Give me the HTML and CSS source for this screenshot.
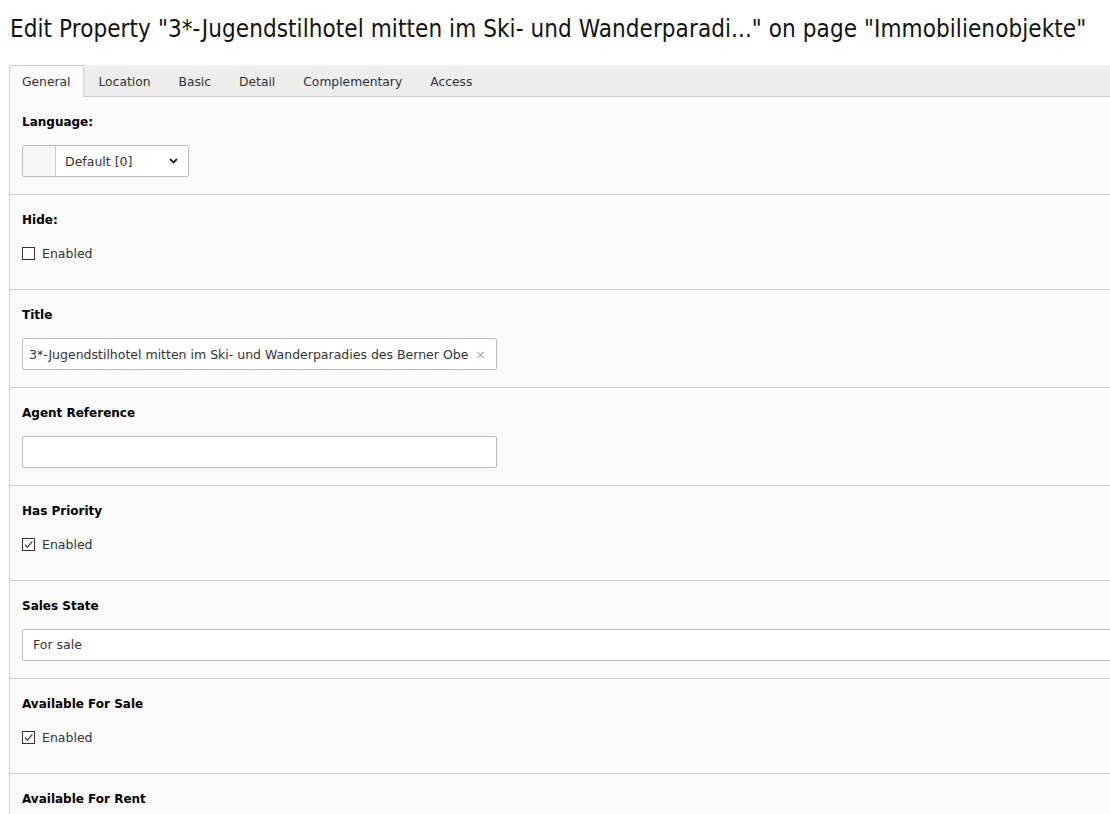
FILE: index.html
```html
<!DOCTYPE html>
<html lang="en">
<head>
<meta charset="utf-8">
<title>Edit Property</title>
<link rel="stylesheet" href="styles.css">
</head>
<body>
<h1 class="page-title">Edit Property "3*-Jugendstilhotel mitten im Ski- und Wanderparadi..." on page "Immobilienobjekte"</h1>
<div class="tabs">
  <div class="tab active">General</div>
  <div class="tab">Location</div>
  <div class="tab">Basic</div>
  <div class="tab">Detail</div>
  <div class="tab">Complementary</div>
  <div class="tab">Access</div>
</div>
<div class="panel">
  <div class="section">
    <div class="label">Language:</div>
    <div class="lang-select">
      <span class="addon"></span>
      <span class="lang-value">Default [0]</span>
      <svg class="chev" width="9" height="6" viewBox="0 0 9 6"><path d="M1 1 L4.5 4.5 L8 1" fill="none" stroke="#222" stroke-width="1.8"/></svg>
    </div>
  </div>
  <div class="section">
    <div class="label">Hide:</div>
    <div class="check"><span class="box"></span><span>Enabled</span></div>
  </div>
  <div class="section">
    <div class="label">Title</div>
    <div class="input">
      <span class="input-text">3*-Jugendstilhotel mitten im Ski- und Wanderparadies des Berner Oberland</span>
      <span class="clear">&#215;</span>
    </div>
  </div>
  <div class="section">
    <div class="label">Agent Reference</div>
    <div class="input"></div>
  </div>
  <div class="section">
    <div class="label">Has Priority</div>
    <div class="check"><span class="box"><svg width="11" height="11" viewBox="0 0 11 11"><path d="M1.8 5.6 L4.4 8.2 L9.4 2.4" fill="none" stroke="#333" stroke-width="1.1"/></svg></span><span>Enabled</span></div>
  </div>
  <div class="section">
    <div class="label">Sales State</div>
    <div class="wide-select">For sale</div>
  </div>
  <div class="section">
    <div class="label">Available For Sale</div>
    <div class="check"><span class="box"><svg width="11" height="11" viewBox="0 0 11 11"><path d="M1.8 5.6 L4.4 8.2 L9.4 2.4" fill="none" stroke="#333" stroke-width="1.1"/></svg></span><span>Enabled</span></div>
  </div>
  <div class="section">
    <div class="label">Available For Rent</div>
    <div class="check"><span class="box"></span><span>Enabled</span></div>
  </div>
</div>
</body>
</html>
```
FILE: styles.css
```css
html, body {
  margin: 0;
  padding: 0;
  overflow: hidden;
  background: #fff;
}
body {
  font-family: "DejaVu Sans", Verdana, sans-serif;
  font-size: 12.5px;
  color: #333;
  width: 1110px;
  height: 814px;
}
.page-title {
  margin: 0;
  padding: 12px 10px 0 10px;
  height: 53px;
  box-sizing: border-box;
  font-family: "DejaVu Sans Condensed", "Liberation Sans Narrow", sans-serif;
  font-weight: normal;
  font-size: 24px;
  letter-spacing: 0.08px;
  line-height: 34px;
  color: #111;
  white-space: nowrap;
}
.tabs {
  display: flex;
  margin-top: 12px;
  margin-left: 9px;
  width: 1300px;
  height: 32px;
  background: #ededed;
  border-bottom: 1px solid #ccc;
  box-sizing: border-box;
}
.tab {
  padding: 1px 13px 0 12px;
  line-height: 31px;
  height: 32px;
  box-sizing: border-box;
  border: 1px solid transparent;
  border-bottom: none;
  color: #333;
  font-size: 12.3px;
}
.tab + .tab {
  padding-left: 13px;
}
.tab.active {
  background: #fafafa;
  border-color: #ccc;
  border-radius: 2px 2px 0 0;
  margin-bottom: -1px;
}
.panel {
  margin-left: 9px;
  width: 1300px;
  background: #fafafa;
  border-left: 1px solid #ccc;
}
.section {
  padding: 16px 12px 17px 12px;
  border-bottom: 1px solid #ccc;
}
.label {
  font-weight: bold;
  font-size: 12px;
  color: #000;
  line-height: 18px;
  height: 18px;
  margin-bottom: 14px;
}
.lang-select {
  display: flex;
  align-items: center;
  width: 167px;
  height: 32px;
  box-sizing: border-box;
  border: 1px solid #bbb;
  border-radius: 2px;
  background: #fff;
}
.addon {
  width: 32px;
  height: 100%;
  background: #f5f5f5;
  border-right: 1px solid #ccc;
}
.lang-value {
  flex: 1;
  padding-left: 9px;
  color: #333;
}
.chev {
  margin-right: 10px;
}
.check {
  display: flex;
  align-items: center;
  height: 20px;
  margin-bottom: 9px;
  color: #333;
}
.box {
  width: 13px;
  height: 13px;
  box-sizing: border-box;
  border: 1px solid #333;
  background: #fff;
  margin-right: 7px;
  display: flex;
  align-items: center;
  justify-content: center;
}
.box svg {
  display: block;
}
.input {
  display: flex;
  align-items: center;
  width: 475px;
  height: 32px;
  box-sizing: border-box;
  border: 1px solid #bbb;
  border-radius: 2px;
  background: #fff;
  padding-left: 6px;
}
.input-text {
  width: 439px;
  overflow: hidden;
  white-space: nowrap;
  color: #333;
}
.clear {
  margin-left: 7px;
  color: #aaa;
  font-size: 13px;
}
.wide-select {
  width: 100%;
  height: 32px;
  box-sizing: border-box;
  border: 1px solid #bbb;
  border-radius: 2px;
  background: #fff;
  padding-left: 10px;
  line-height: 30px;
  color: #333;
}
```
